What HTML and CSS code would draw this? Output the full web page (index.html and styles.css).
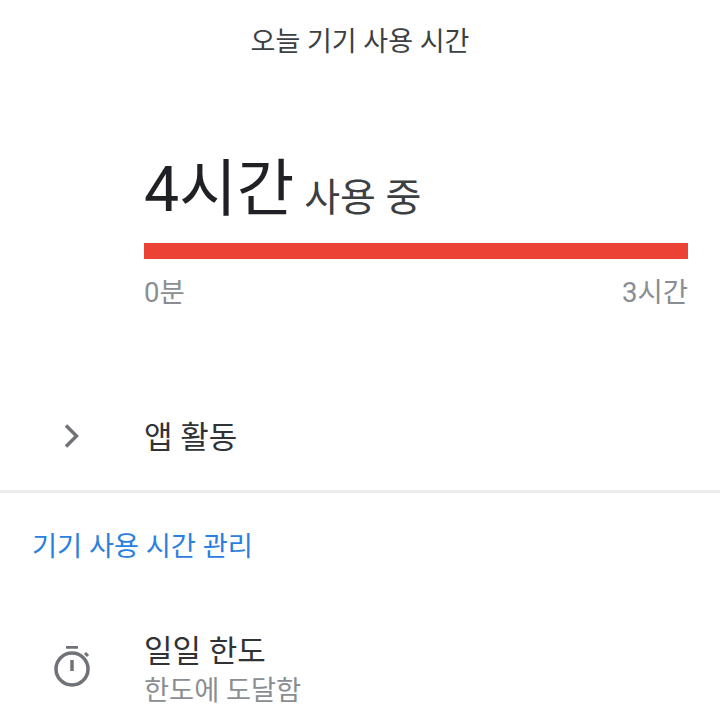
FILE: index.html
```html
<!DOCTYPE html>
<html lang="ko">
<head>
    <meta charset="UTF-8">
    <meta name="viewport" content="width=device-width, initial-scale=1.0">
    <title>오늘 기기 사용 시간</title>
    <link rel="stylesheet" href="styles.css">
</head>
<body>

    <div class="title">오늘 기기 사용 시간</div>

    <div class="usage">
        <div class="usage-text"><span class="usage-big">4시간</span><span class="usage-small">사용 중</span></div>
        <div class="bar"></div>
        <div class="bar-labels"><span>0분</span><span>3시간</span></div>
    </div>

    <div class="row row-app">
        <div class="row-icon">
            <svg width="20" height="28" viewBox="0 -2 20 28"><path d="M4 3.5 L14.5 14 L4 24.5" fill="none" stroke="#6f7377" stroke-width="3.5"/></svg>
        </div>
        <div class="row-label">앱 활동</div>
    </div>

    <div class="divider"></div>

    <div class="section-title">기기 사용 시간 관리</div>

    <div class="row row-limit">
        <div class="row-icon">
            <svg width="40" height="44" viewBox="0 2 40 44">
                <path d="M14 3 H26" stroke="#6f7377" stroke-width="3.5" fill="none"/>
                <circle cx="20" cy="25" r="16" fill="none" stroke="#6f7377" stroke-width="3.5"/>
                <path d="M20 16 V27" stroke="#6f7377" stroke-width="3.5" fill="none"/>
                <path d="M33 9 L36 12" stroke="#6f7377" stroke-width="3" fill="none"/>
            </svg>
        </div>
        <div>
            <div class="row-label">일일 한도</div>
            <div class="row-sub">한도에 도달함</div>
        </div>
    </div>

</body>
</html>
```

FILE: styles.css
```css
body {
    margin: 0;
    height: 720px;
    overflow: hidden;
    background-color: white;
    font-family: 'Roboto', 'Noto Sans CJK KR', sans-serif;
    color: #202124;
}

.title {
    padding-top: 24px;
    height: 37px;
    line-height: 37px;
    text-align: center;
    font-size: 27px;
    color: #3c4043;
}

.usage {
    padding: 93px 32px 0 144px;
}

.usage-text {
    height: 72px;
    line-height: 72px;
}

.usage-big {
    font-size: 62.5px;
}

.usage-small {
    margin-left: 10px;
    font-size: 39px;
    color: #3c4043;
}

.bar {
    margin-top: 17px;
    height: 16px;
    background-color: #ea4335;
}

.bar-labels {
    display: flex;
    justify-content: space-between;
    margin-top: 11px;
    font-size: 27.5px;
    color: #8a8e92;
}

.row {
    display: flex;
    align-items: center;
}

.row-icon {
    width: 144px;
    display: flex;
    justify-content: center;
    flex-shrink: 0;
}

.row-app {
    margin-top: 94px;
    height: 60px;
}

.row-label {
    font-size: 31px;
    color: #303336;
}

.divider {
    margin-top: 26px;
    height: 3px;
    background-color: #ececee;
}

.section-title {
    margin-top: 31px;
    padding-left: 32px;
    font-size: 27.25px;
    color: #2a80e0;
}

.row-limit {
    margin-top: 62px;
}

.row-sub {
    margin-top: 2px;
    font-size: 27.25px;
    line-height: 36px;
    color: #8a8e92;
}
```
